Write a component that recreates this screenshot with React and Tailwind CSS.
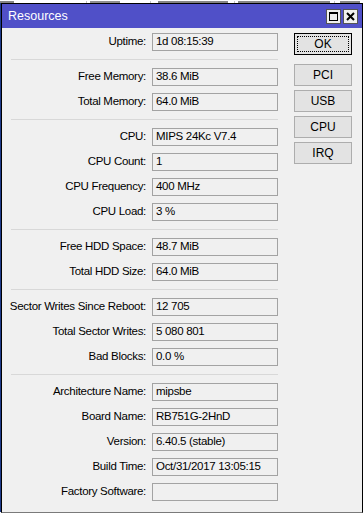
import React from "react";

const font = { fontFamily: '"Liberation Sans", Arial, sans-serif' };

function Row({ label, value }) {
  return (
    <div className="flex items-center h-[18px]">
      <div className="w-[135px] flex justify-end">
        <span className="whitespace-nowrap text-[11.5px] tracking-[-0.3px] text-black leading-none">{label}</span>
      </div>
      <div className="ml-[6px] w-[126px] h-[18px] border border-[#a3a3a3] bg-[#f0f0f0] flex items-center pl-[3px] text-[11.5px] tracking-[-0.3px] text-black leading-none whitespace-nowrap">
        {value}
      </div>
    </div>
  );
}

function Sep() {
  return <div className="h-px my-px w-[267px] bg-[#d8d8d8]" />;
}

function Btn({ children }) {
  return (
    <div className="w-[58px] h-[22px] border border-[#adadad] bg-[#e3e3e3] flex items-center justify-center text-[12px] text-black leading-none">
      {children}
    </div>
  );
}

function Strip() {
  const bits = [
    [0, 14, "#333"], [86, 1, "#999"], [90, 30, "#444"], [150, 1, "#999"], [158, 70, "#333"],
    [234, 1, "#999"], [238, 92, "#333"], [334, 1, "#999"], [340, 20, "#333"],
  ];
  return (
    <div className="h-[3px] flex">
      {bits.map(([x, w, c], i) => (
        <div key={i} className="h-[2px] mt-px" style={{ marginLeft: i === 0 ? x : x - (bits[i - 1][0] + bits[i - 1][1]), width: w, background: c, opacity: 0.6 }} />
      ))}
    </div>
  );
}

export default function App() {
  return (
    <div className="w-[364px] h-[515px] bg-white overflow-hidden" style={font}>
      <Strip />
      <div className="flex">
        <div className="w-px h-[509px] bg-[#1e3a8a]" />
        {/* window */}
        <div className="w-[362px] h-[510px] border border-black border-b-[#7a7a7a] bg-[#f0f0f0] flex flex-col">
          <div className="h-[24px] bg-[#5050c8] flex items-center pl-[6px] pr-[4px]">
            <span className="text-white text-[12.5px] leading-none">Resources</span>
            <div className="ml-auto flex gap-[2px]">
              <div className="w-[15px] h-[15px] bg-[#f0f0f0] border border-[#555] flex items-center justify-center">
                <div className="w-[9px] h-[9px] border border-black border-t-2" />
              </div>
              <div className="w-[15px] h-[15px] bg-[#f0f0f0] border border-[#555] flex items-center justify-center">
                <svg width="9" height="9" viewBox="0 0 9 9">
                  <path d="M1 1 L8 8 M8 1 L1 8" stroke="black" strokeWidth="2" />
                </svg>
              </div>
            </div>
          </div>
          <div className="flex pt-[5px] pl-[9px]">
            <div className="flex flex-col gap-[7px]">
              <Row label="Uptime:" value="1d 08:15:39" />
              <Sep />
              <Row label="Free Memory:" value="38.6 MiB" />
              <Row label="Total Memory:" value="64.0 MiB" />
              <Sep />
              <Row label="CPU:" value="MIPS 24Kc V7.4" />
              <Row label="CPU Count:" value="1" />
              <Row label="CPU Frequency:" value="400 MHz" />
              <Row label="CPU Load:" value="3 %" />
              <Sep />
              <Row label="Free HDD Space:" value="48.7 MiB" />
              <Row label="Total HDD Size:" value="64.0 MiB" />
              <Sep />
              <Row label="Sector Writes Since Reboot:" value="12 705" />
              <Row label="Total Sector Writes:" value="5 080 801" />
              <Row label="Bad Blocks:" value="0.0 %" />
              <Sep />
              <Row label="Architecture Name:" value="mipsbe" />
              <Row label="Board Name:" value="RB751G-2HnD" />
              <Row label="Version:" value="6.40.5 (stable)" />
              <Row label="Build Time:" value="Oct/31/2017 13:05:15" />
              <Row label="Factory Software:" value="" />
            </div>
            <div className="ml-[16px] flex flex-col gap-[4px]">
              <div className="w-[58px] h-[22px] border border-black bg-[#e3e3e3] p-[2px] mb-[5px]">
                <div className="w-full h-full border border-dotted border-black flex items-center justify-center text-[12px] text-black leading-none">
                  OK
                </div>
              </div>
              <Btn>PCI</Btn>
              <Btn>USB</Btn>
              <Btn>CPU</Btn>
              <Btn>IRQ</Btn>
            </div>
          </div>
        </div>
      </div>
    </div>
  );
}
